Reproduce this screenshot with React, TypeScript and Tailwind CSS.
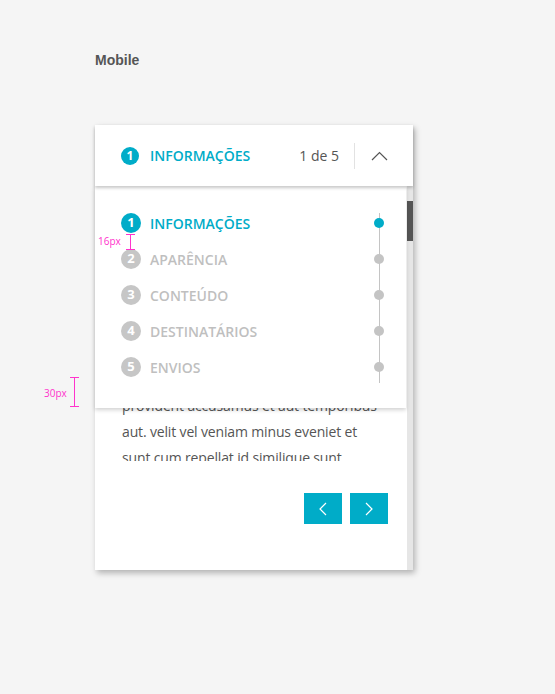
import React from 'react';

const steps = ['Informações', 'Aparência', 'Conteúdo', 'Destinatários', 'Envios'];

const lines = [
  'Lorem ipsum dolor sit amet, consectetur',
  'adipisicing elit. Quae, dolorum, earum',
  'nesciunt facere voluptates sequi illo',
  'atque totam harum quasi repudiandae',
  'ratione rerum magni eius fugit dolores',
  'delectus odit quod placeat ducimus',
  'dignissimos ipsa, nihil quibusdam',
  'provident accusamus et aut temporibus',
  'aut. velit vel veniam minus eveniet et',
  'sunt cum repellat id similique sunt',
];

const font = { fontFamily: '"Open Sans", "Noto Sans", sans-serif' };

export default function App() {
  return (
    <div className="relative min-h-screen bg-[#f5f5f5] pt-[52px] pl-[95px]">
      <div className="text-[14px] leading-4 font-bold text-[#555]" style={{ fontFamily: '"Liberation Sans", Arial, sans-serif' }}>
        Mobile
      </div>

      {/* Card */}
      <div className="relative mt-[57px] w-[318px] h-[445px] bg-white shadow-[2px_3px_6px_rgba(0,0,0,0.28)] flex flex-col" style={font}>
        {/* Header */}
        <div className="relative z-20 h-[61px] shrink-0 bg-white flex items-center pl-[26px] pr-[10px] shadow-[0_2px_3px_rgba(0,0,0,0.22)]">
          <span className="w-[18px] h-[18px] rounded-full bg-[#00acc8] text-white text-[12px] font-bold flex items-center justify-center">1</span>
          <span className="ml-[11px] text-[14px] font-semibold uppercase text-[#00acc8]">Informações</span>
          <span className="ml-auto text-[14px] text-[#555]">1 de 5</span>
          <span className="ml-[15px] w-px h-[26px] bg-[#e2e2e2]" />
          <span className="w-[48px] flex justify-center">
            <svg width="17" height="10" viewBox="0 0 17 10" fill="none">
              <polyline points="1,9 8.5,1.5 16,9" stroke="#555" strokeWidth="1.2" />
            </svg>
          </span>
        </div>

        {/* Body */}
        <div className="flex flex-1">
          <div className="flex-1 flex flex-col">
            <div className="h-[275px] overflow-hidden pt-[25px] pl-[27px] text-[14px] tracking-[-0.15px] leading-[26px] text-[#555]">
              {lines.map(l => (
                <div key={l} className="whitespace-nowrap">{l}</div>
              ))}
            </div>
            <div className="mt-[32px] flex justify-end gap-2 pr-[19px]">
              <button className="w-[38px] h-[31px] bg-[#00acc8] flex items-center justify-center">
                <svg width="8" height="14" viewBox="0 0 8 14" fill="none">
                  <polyline points="7,1 1,7 7,13" stroke="white" strokeWidth="1.2" />
                </svg>
              </button>
              <button className="w-[38px] h-[31px] bg-[#00acc8] flex items-center justify-center">
                <svg width="8" height="14" viewBox="0 0 8 14" fill="none">
                  <polyline points="1,1 7,7 1,13" stroke="white" strokeWidth="1.2" />
                </svg>
              </button>
            </div>
          </div>
          <div className="w-[6px] bg-[#e6e6e6] pt-[15px]">
            <div className="h-[40px] bg-[#555]" />
          </div>
        </div>

        {/* Dropdown */}
        <div className="absolute z-10 left-0 top-[61px] w-[311px] h-[222px] bg-white shadow-[0_2px_4px_rgba(0,0,0,0.18)] pt-[19px] pl-[26px] pr-[22px]">
          <div className="absolute left-[284px] top-[27px] h-[170px] w-px bg-[#c4c4c4]" />
          {steps.map((s, i) => {
            const active = i === 0;
            return (
              <div key={s} className="relative h-9 flex items-center">
                <span className={`w-5 h-5 rounded-full text-white text-[13px] font-bold flex items-center justify-center ${active ? 'bg-[#00acc8]' : 'bg-[#c6c6c6]'}`}>
                  {i + 1}
                </span>
                <span className={`ml-[9px] text-[14px] font-semibold uppercase ${active ? 'text-[#00acc8]' : 'text-[#bfbfbf]'}`}>
                  {s}
                </span>
                <span className={`ml-auto w-[10px] h-[10px] rounded-full ${active ? 'bg-[#00acc8]' : 'bg-[#c4c4c4]'}`} />
              </div>
            );
          })}
        </div>
      </div>

      {/* Spacing annotations */}
      <div className="absolute z-30 left-[98px] top-[235px] text-[10px] leading-3 text-[#ff33cc]" style={font}>16px</div>
      <div className="absolute z-30 left-[126px] top-[234px] w-[9px] h-[16px] border-y border-[#ff33cc] flex justify-center">
        <div className="w-px h-full bg-[#ff33cc]" />
      </div>
      <div className="absolute z-30 left-[44px] top-[387px] text-[10px] leading-3 text-[#ff33cc]" style={font}>30px</div>
      <div className="absolute z-30 left-[70px] top-[377px] w-[9px] h-[30px] border-y border-[#ff33cc] flex justify-center">
        <div className="w-px h-full bg-[#ff33cc]" />
      </div>
    </div>
  );
}
